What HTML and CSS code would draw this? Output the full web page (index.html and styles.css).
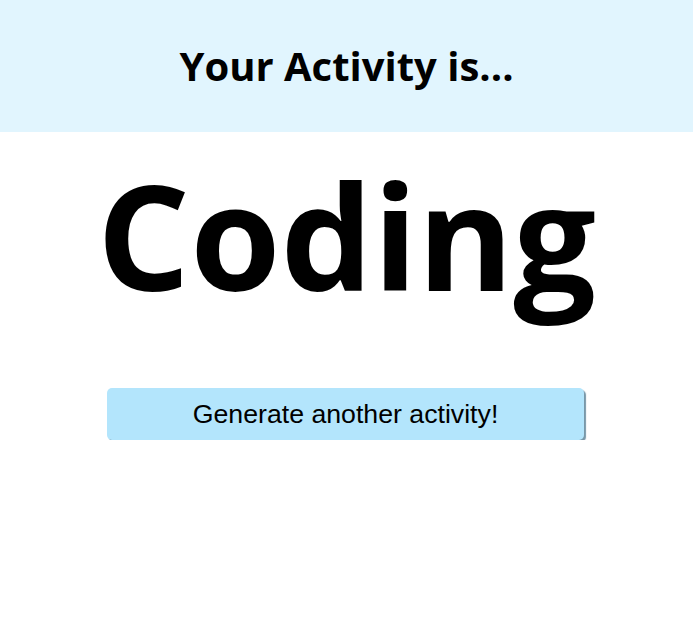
FILE: index.html
```html
<!DOCTYPE html>
<html>
<head>
<meta charset="utf-8">
<link rel="stylesheet" href="styles.css">
</head>
<body>
<header class="header">
  <h1 class="title">Your Activity is...</h1>
</header>
<main class="main">
  <h2 class="activity">Coding</h2>
  <button class="generate">Generate another activity!</button>
</main>
</body>
</html>
```
FILE: styles.css
```css
html, body {
  margin: 0;
  padding: 0;
  background: #ffffff;
}
body {
  font-family: "Open Sans", "Noto Sans", sans-serif;
}
.header {
  background: #e1f5fe;
  height: 132px;
  display: flex;
  align-items: center;
  justify-content: center;
}
.title {
  margin: 0;
  font-size: 40px;
  font-weight: 700;
  color: #000;
  line-height: 1;
}
.main {
  display: flex;
  flex-direction: column;
  align-items: center;
}
.activity {
  margin: 15px 0 0;
  font-size: 146px;
  font-weight: 700;
  line-height: 1.2;
  color: #000;
  letter-spacing: 0;
}
.generate {
  margin-top: 66px;
  margin-left: -2px;
  width: 477px;
  height: 52px;
  background: #b3e5fc;
  border: none;
  border-radius: 5px;
  box-shadow: 2px 2px 1px #7897a8;
  font-family: "Liberation Sans", Arial, sans-serif;
  font-size: 26.7px;
  color: #000;
  cursor: pointer;
}
```
